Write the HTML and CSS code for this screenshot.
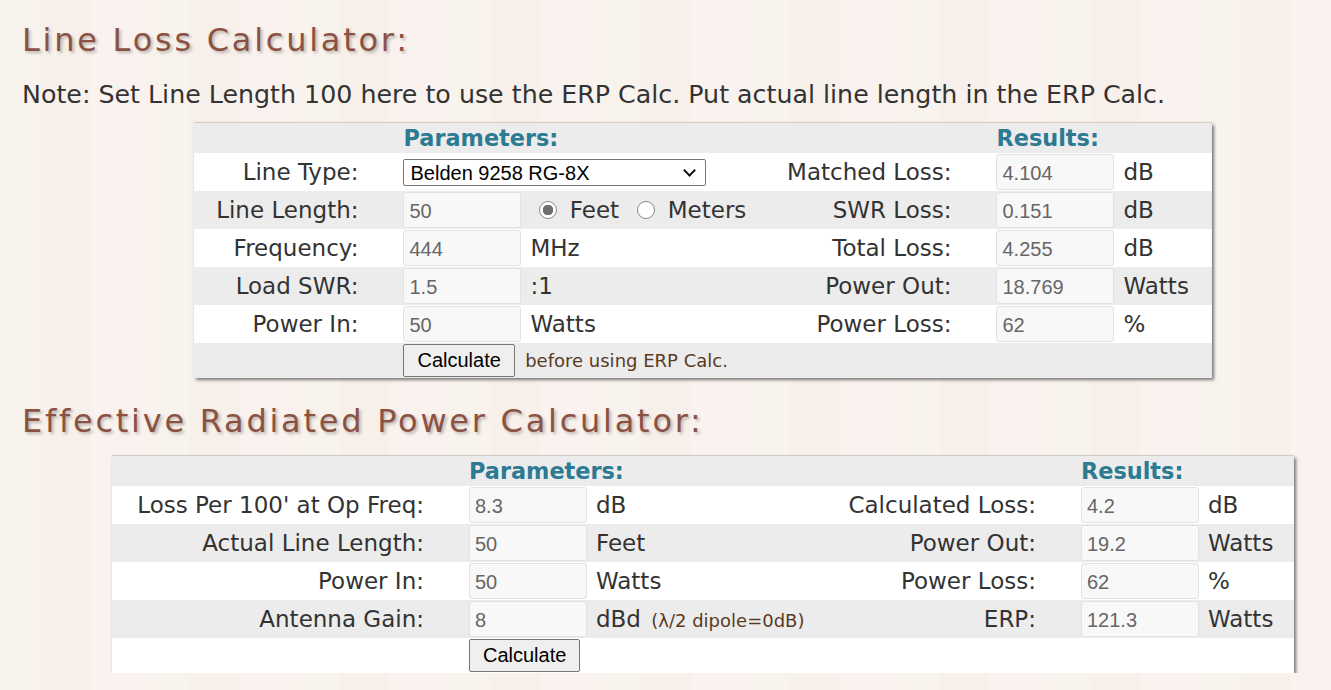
FILE: index.html
```html
<!DOCTYPE html>
<html lang="en">
<head>
  <meta charset="UTF-8" />
  <meta name="viewport" content="width=device-width, initial-scale=1.0"/>
  <title>Line Loss &amp; ERP Calculators</title>
  <link rel="stylesheet" href="styles.css">
</head>
<body>

  <!-- Line loss -->
  <div class="section">
    <h2>Line Loss Calculator:</h2>
    <p class="note">Note: Set Line Length 100 here to use the ERP Calc. Put actual line length in the ERP Calc.</p>

    <div class="center">
      <table class="calc calc-loss">
        <colgroup>
          <col style="width:185px">
          <col style="width:146px">
          <col style="width:234px">
          <col style="width:213px">
          <col style="width:146px">
          <col style="width:93px">
        </colgroup>
        <tr class="head">
          <td></td>
          <td colspan="2">Parameters:</td>
          <td></td>
          <td colspan="2">Results:</td>
        </tr>
        <tr>
          <td class="lbl">Line Type:</td>
          <td colspan="2" class="inp">
            <span class="select-wrap">
              <select id="lineType">
                <option>Belden 9258 RG-8X</option>
                <option>Belden 9913 RG-8</option>
                <option>LMR-400</option>
                <option>RG-58</option>
                <option>RG-213</option>
              </select>
            </span>
          </td>
          <td class="lbl">Matched Loss:</td>
          <td class="inp"><input type="text" value="4.104" readonly></td>
          <td class="unit">dB</td>
        </tr>
        <tr>
          <td class="lbl">Line Length:</td>
          <td class="inp"><input type="text" value="50"></td>
          <td class="unit">
            <label class="radio"><input type="radio" name="units" checked> Feet</label>
            <label class="radio"><input type="radio" name="units"> Meters</label>
          </td>
          <td class="lbl">SWR Loss:</td>
          <td class="inp"><input type="text" value="0.151" readonly></td>
          <td class="unit">dB</td>
        </tr>
        <tr>
          <td class="lbl">Frequency:</td>
          <td class="inp"><input type="text" value="444"></td>
          <td class="unit">MHz</td>
          <td class="lbl">Total Loss:</td>
          <td class="inp"><input type="text" value="4.255" readonly></td>
          <td class="unit">dB</td>
        </tr>
        <tr>
          <td class="lbl">Load SWR:</td>
          <td class="inp"><input type="text" value="1.5"></td>
          <td class="unit">:1</td>
          <td class="lbl">Power Out:</td>
          <td class="inp"><input type="text" value="18.769" readonly></td>
          <td class="unit">Watts</td>
        </tr>
        <tr>
          <td class="lbl">Power In:</td>
          <td class="inp"><input type="text" value="50"></td>
          <td class="unit">Watts</td>
          <td class="lbl">Power Loss:</td>
          <td class="inp"><input type="text" value="62" readonly></td>
          <td class="unit">%</td>
        </tr>
        <tr class="foot">
          <td></td>
          <td colspan="2" class="inp"><button type="button">Calculate</button> <span class="hint">before using ERP Calc.</span></td>
          <td></td>
          <td></td>
          <td></td>
        </tr>
      </table>
    </div>
  </div>

  <!-- ERP -->
  <div class="section">
    <h2 class="erp-title">Effective Radiated Power Calculator:</h2>

    <div class="center">
      <table class="calc calc-erp">
        <colgroup>
          <col style="width:333px">
          <col style="width:146px">
          <col style="width:229px">
          <col style="width:237px">
          <col style="width:146px">
          <col style="width:91px">
        </colgroup>
        <tr class="head">
          <td></td>
          <td colspan="2">Parameters:</td>
          <td></td>
          <td colspan="2">Results:</td>
        </tr>
        <tr>
          <td class="lbl">Loss Per 100' at Op Freq:</td>
          <td class="inp"><input type="text" value="8.3"></td>
          <td class="unit">dB</td>
          <td class="lbl">Calculated Loss:</td>
          <td class="inp"><input type="text" value="4.2" readonly></td>
          <td class="unit">dB</td>
        </tr>
        <tr>
          <td class="lbl">Actual Line Length:</td>
          <td class="inp"><input type="text" value="50"></td>
          <td class="unit">Feet</td>
          <td class="lbl">Power Out:</td>
          <td class="inp"><input type="text" value="19.2" readonly></td>
          <td class="unit">Watts</td>
        </tr>
        <tr>
          <td class="lbl">Power In:</td>
          <td class="inp"><input type="text" value="50"></td>
          <td class="unit">Watts</td>
          <td class="lbl">Power Loss:</td>
          <td class="inp"><input type="text" value="62" readonly></td>
          <td class="unit">%</td>
        </tr>
        <tr>
          <td class="lbl">Antenna Gain:</td>
          <td class="inp"><input type="text" value="8"></td>
          <td class="unit">dBd <span class="hint">(&lambda;/2 dipole=0dB)</span></td>
          <td class="lbl">ERP:</td>
          <td class="inp"><input type="text" value="121.3" readonly></td>
          <td class="unit">Watts</td>
        </tr>
        <tr class="foot">
          <td></td>
          <td class="inp"><button type="button">Calculate</button></td>
          <td></td>
          <td></td>
          <td></td>
          <td></td>
        </tr>
      </table>
    </div>
  </div>

</body>
</html>
```

FILE: styles.css
```css
body {
  font-family: "DejaVu Sans", Verdana, sans-serif;
  margin: 0;
  color: #333;
  background-color: #f8f1ec;
  background-image: repeating-linear-gradient(90deg, rgba(255,255,255,0.12) 0 40px, rgba(236,224,214,0.08) 40px 90px, rgba(255,255,255,0.1) 90px 150px);
}

.section {
  padding: 0 0 0 22px;
}

h2 {
  margin: 0;
  padding-top: 22px;
  font-size: 32px;
  font-weight: normal;
  letter-spacing: 2.75px;
  color: #8b5243;
  text-shadow: 2px 2px 3px rgba(0,0,0,0.25);
  line-height: 36px;
}

.erp-title {
  padding-top: 25px;
}

.note {
  margin: 22px 0 0;
  font-size: 25.3px;
  line-height: 30px;
}

.center {
  margin-left: 53px;
}

.calc {
  margin: 0 auto;
  border-collapse: collapse;
  table-layout: fixed;
  background-color: #fff;
  box-shadow: 2px 2px 3px rgba(0,0,0,0.5), 0 -1px 1px rgba(0,0,0,0.12);
  font-size: 23px;
}

.calc-loss {
  width: 1017px;
  margin-top: 13px;
}

.calc-erp {
  width: 1182px;
  margin-top: 17px;
}

.calc td {
  padding: 0;
  white-space: nowrap;
}

.calc tr {
  height: 38px;
}

.calc tr:nth-child(odd) {
  background-color: #ececec;
}

.calc tr.head {
  height: 30px;
}

.calc tr.head td {
  padding-left: 24px;
  font-size: 22.4px;
  font-weight: bold;
  color: #2d7a93;
  line-height: 26px;
}

.calc tr.foot {
  height: 35px;
}

.lbl {
  text-align: right;
  padding-right: 21px !important;
}

.inp {
  padding-left: 24px !important;
}

.unit {
  padding-left: 5px !important;
}

.calc input[type="text"] {
  width: 118px;
  height: 36px;
  box-sizing: border-box;
  padding: 2px 5px 0;
  border: 1px solid #e2e2e2;
  border-radius: 3px;
  background-color: #f8f8f8;
  font-family: "Liberation Sans", Arial, sans-serif;
  font-size: 20px;
  color: #666;
  vertical-align: middle;
}

.select-wrap {
  position: relative;
  display: inline-block;
  vertical-align: middle;
}

/* thin chevron drawn over the select's right side */
.select-wrap::after {
  content: "";
  position: absolute;
  right: 12px;
  top: 7px;
  width: 7px;
  height: 7px;
  border-right: 2px solid #111;
  border-bottom: 2px solid #111;
  transform: rotate(45deg);
  pointer-events: none;
}

.calc select {
  display: block;
  width: 303px;
  height: 27px;
  box-sizing: border-box;
  padding: 0 4px 0 6px;
  border: 1px solid #767676;
  border-radius: 2px;
  appearance: none;
  -webkit-appearance: none;
  background-color: #fff;
  font-family: "Liberation Sans", Arial, sans-serif;
  font-size: 20px;
  color: #000;
}

.radio {
  margin-left: 9px;
  margin-right: 2px;
}

.radio input {
  appearance: none;
  -webkit-appearance: none;
  width: 18px;
  height: 18px;
  margin: 0 5px 0 0;
  border: 1px solid #8a8a8a;
  border-radius: 50%;
  background-color: #fff;
  vertical-align: -1px;
}

.radio input:checked {
  background: radial-gradient(circle, #6f6f6f 0 5px, #fff 5.5px);
}

button {
  height: 33px;
  padding: 0 13px;
  border: 1px solid #767676;
  border-radius: 2px;
  background-color: #efefef;
  font-family: "Liberation Sans", Arial, sans-serif;
  font-size: 20px;
  color: #000;
  cursor: pointer;
  vertical-align: middle;
}

button:hover {
  background-color: #e5e5e5;
}

.hint {
  font-size: 18px;
  color: #5a3b1f;
  margin-left: 3px;
}
```
